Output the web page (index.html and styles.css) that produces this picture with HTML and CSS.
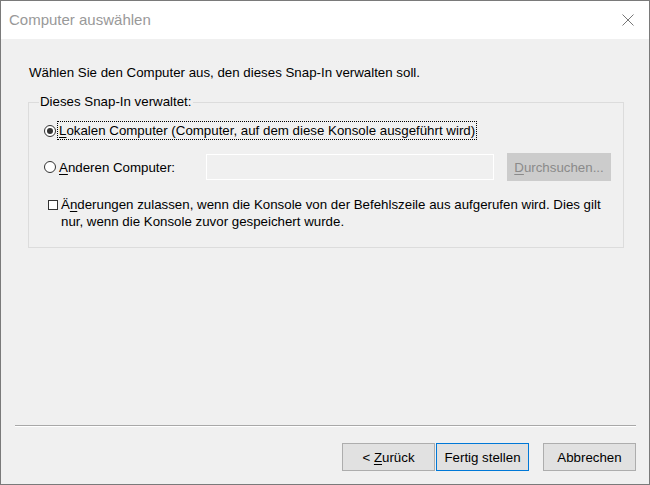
FILE: index.html
```html
<!DOCTYPE html>
<html lang="de">
<head>
<meta charset="utf-8">
<title>Computer auswählen</title>
<link rel="stylesheet" href="styles.css">
</head>
<body>
<div class="window">
  <div class="titlebar">
    <span class="title">Computer auswählen</span>
    <svg class="close" width="12" height="12" viewBox="0 0 12 12"><path d="M0.5 0.5 L11.5 11.5 M11.5 0.5 L0.5 11.5" stroke="#777" stroke-width="1" fill="none"/></svg>
  </div>
  <div class="content">
    <p class="intro">Wählen Sie den Computer aus, den dieses Snap-In verwalten soll.</p>
    <fieldset class="group">
      <legend class="legend">Dieses Snap-In verwaltet:</legend>
      <div class="inner">
        <div class="row row-local">
          <span class="radio checked"></span>
          <span class="focus"><u>L</u>okalen Computer (Computer, auf dem diese Konsole ausgeführt wird)</span>
        </div>
        <div class="row row-other">
          <span class="radio"></span>
          <span class="lbl"><u>A</u>nderen Computer:</span>
          <span class="field"></span>
          <span class="btn btn-disabled"><span><u>D</u>urchsuchen...</span></span>
        </div>
        <p class="check"><span class="box"></span><span class="ctext">Ä<u>n</u>derungen zulassen, wenn die Konsole von der Befehlszeile aus aufgerufen wird. Dies gilt nur, wenn die Konsole zuvor gespeichert wurde.</span></p>
      </div>
    </fieldset>
    <div class="sep"></div>
    <div class="buttons">
      <span class="btn"><span>&lt; <u>Z</u>urück</span></span>
      <span class="btn btn-default"><span>Fertig stellen</span></span>
      <span class="btn btn-cancel"><span>Abbrechen</span></span>
    </div>
  </div>
</div>
</body>
</html>
```

FILE: styles.css
```css
html, body {
  margin: 0;
  padding: 0;
}
body {
  font-family: "Liberation Sans", Arial, sans-serif;
  font-size: 13.3px;
  color: #000;
  background: #f0f0f0;
}
.window {
  width: 650px;
  height: 485px;
  box-sizing: border-box;
  border: 1px solid #7a7a7a;
  background: #f0f0f0;
  display: flex;
  flex-direction: column;
}
.titlebar {
  height: 38px;
  background: #fff;
  display: flex;
  align-items: center;
  justify-content: space-between;
  padding: 0 15px 0 8px;
  flex: none;
}
.title {
  font-size: 15px;
  color: #999;
  line-height: 18px;
}
.close {
  display: block;
}
.content {
  flex: 1;
  display: flex;
  flex-direction: column;
  padding: 0 13px 13px 0;
}
.intro {
  margin: 26px 0 0 28px;
  line-height: 16px;
}
.group {
  margin: 13px 0 0 27px;
  padding: 0 0 17px 0;
  border: 1px solid #dcdcdc;
  width: 596px;
  box-sizing: border-box;
  min-width: 0;
}
.legend {
  padding: 0 1px;
  margin-left: 10px;
  line-height: 16px;
}
.inner {
  padding-left: 15px;
}
.row {
  display: flex;
  align-items: center;
}
.row-local {
  height: 19px;
  margin-top: 11px;
}
.row-other {
  height: 28px;
  margin-top: 13px;
}
.radio {
  width: 12px;
  height: 12px;
  box-sizing: border-box;
  border: 1px solid #333;
  border-radius: 50%;
  background: #fff;
  flex: none;
  position: relative;
}
.radio.checked::after {
  content: "";
  position: absolute;
  left: 2px;
  top: 2px;
  width: 6px;
  height: 6px;
  border-radius: 50%;
  background: #333;
}
.focus {
  margin-left: 1px;
  padding: 0 1px;
  border: 1px dotted #000;
  line-height: 17px;
}
.lbl {
  margin-left: 3px;
  width: 147px;
  flex: none;
}
.field {
  width: 288px;
  height: 26px;
  box-sizing: border-box;
  border: 1px solid #fff;
  background: #f0f0f0;
  flex: none;
}
.btn {
  display: flex;
  align-items: center;
  justify-content: center;
  width: 93px;
  height: 28px;
  box-sizing: border-box;
  border: 1px solid #adadad;
  background: #e1e1e1;
  flex: none;
}
.btn-disabled {
  margin-left: 13px;
  width: 104px;
  border-color: #cccccc;
  background: #cccccc;
  color: #8a8a8a;
}
.check {
  margin: 15px 10px 0 17px;
  line-height: 17px;
  text-indent: -13px;
}
.box {
  display: inline-block;
  width: 10px;
  height: 10px;
  box-sizing: border-box;
  border: 1px solid #333;
  background: #fff;
  vertical-align: -1px;
  margin-right: 3px;
}
.sep {
  margin: auto 0 0 14px;
  height: 0;
  border-top: 1px solid #a8a8a8;
  border-bottom: 1px solid #fff;
}
.buttons {
  display: flex;
  justify-content: flex-end;
  margin-top: 16px;
}
.btn-default {
  margin-left: 1px;
  border-color: #0078d7;
}
.btn-cancel {
  margin-left: 14px;
}
u {
  text-decoration: underline;
  text-underline-offset: 2px;
}
```
